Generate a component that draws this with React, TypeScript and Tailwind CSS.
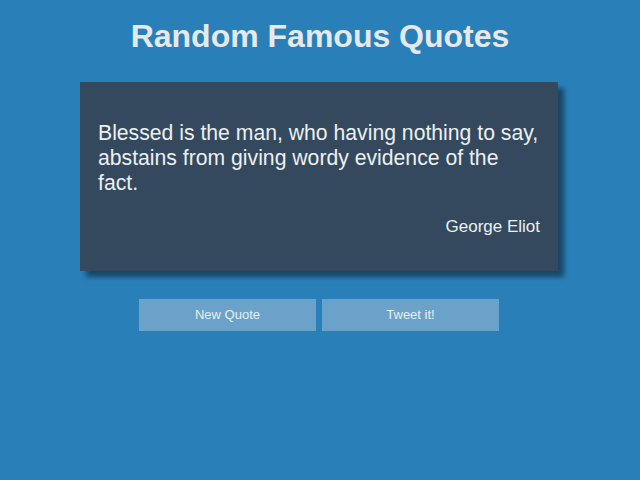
export default function App() {
  return (
    <div className="min-h-screen bg-[#2980b9] pt-4 font-['Liberation_Sans',Arial,sans-serif]">
      <h1 className="text-center text-[32px] leading-[40px] font-bold text-[#e6e9ec]">Random Famous Quotes</h1>
      <div className="mt-[26px] ml-[80px] w-[478px] bg-[#34495e] px-[18px] pt-[38px] pb-[34px] text-[#ecf0f1] shadow-[6px_6px_5px_rgba(0,0,0,0.45)]">
        <p className="text-[21.2px] leading-[25px]">
          Blessed is the man, who having nothing to say, abstains from giving wordy evidence of the fact.
        </p>
        <p className="mt-[22px] text-right text-[17px] leading-[20px]">George Eliot</p>
      </div>
      <div className="mt-[28px] flex justify-center gap-[6px] pr-[2px]">
        <button className="h-8 w-[177px] bg-[#6aa2ca] text-[13px] text-[#e8eef2]">New Quote</button>
        <button className="h-8 w-[177px] bg-[#6aa2ca] text-[13px] text-[#e8eef2]">Tweet it!</button>
      </div>
    </div>
  );
}
